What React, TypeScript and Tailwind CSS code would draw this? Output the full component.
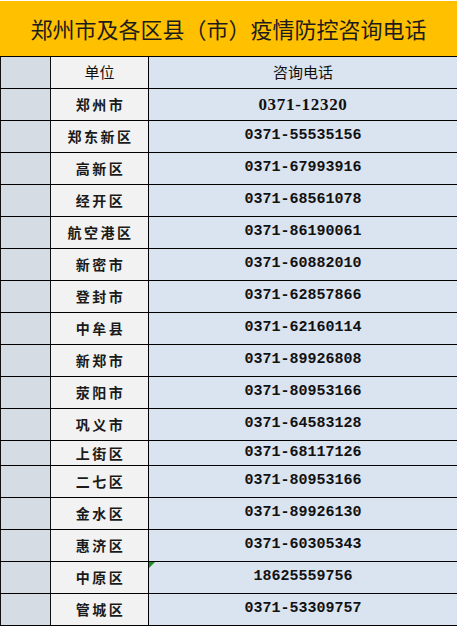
import React from "react";

type Row = { name: string; phone: string; short?: boolean; first?: boolean; flag?: boolean };

const rows: Row[] = [
  { name: "郑州市", phone: "0371-12320", first: true },
  { name: "郑东新区", phone: "0371-55535156" },
  { name: "高新区", phone: "0371-67993916" },
  { name: "经开区", phone: "0371-68561078" },
  { name: "航空港区", phone: "0371-86190061" },
  { name: "新密市", phone: "0371-60882010" },
  { name: "登封市", phone: "0371-62857866" },
  { name: "中牟县", phone: "0371-62160114" },
  { name: "新郑市", phone: "0371-89926808" },
  { name: "荥阳市", phone: "0371-80953166" },
  { name: "巩义市", phone: "0371-64583128" },
  { name: "上街区", phone: "0371-68117126", short: true },
  { name: "二七区", phone: "0371-80953166" },
  { name: "金水区", phone: "0371-89926130" },
  { name: "惠济区", phone: "0371-60305343" },
  { name: "中原区", phone: "18625559756", flag: true },
  { name: "管城区", phone: "0371-53309757" },
];

const cjk = "font-['Noto_Sans_CJK_SC',sans-serif]";

export default function App() {
  return (
    <div className="w-[457px] h-[627px] bg-white overflow-hidden">
      <div
        className={`mt-px h-[55px] bg-[#FFC000] flex items-center justify-center text-[22px] text-[#1c1c1c] ${cjk}`}
      >
        郑州市及各区县（市）疫情防控咨询电话
      </div>
      <div className="border-t border-black">
        <div className="flex h-[32px] border-b border-black">
          <div className="w-[51px] border-l border-r border-[#111] bg-[#D6DCE4]" />
          <div
            className={`w-[98px] border-r border-black bg-[#F2F2F2] flex items-center justify-center text-[15px] text-[#111] ${cjk}`}
          >
            单位
          </div>
          <div
            className={`flex-1 bg-[#DAE3F0] flex items-center justify-center text-[15px] text-[#111] ${cjk}`}
          >
            咨询电话
          </div>
        </div>
        {rows.map((r) => (
          <div
            key={r.name}
            className={`flex border-b border-black ${r.short ? "h-[25px]" : "h-[32px]"}`}
          >
            <div className="w-[51px] border-l border-r border-[#111] bg-[#D6DCE4]" />
            <div
              className={`w-[98px] border-r border-black bg-[#F2F2F2] flex items-center justify-center pl-[2px] text-[14px] font-bold tracking-[2.5px] text-[#1a1a1a] ${cjk}`}
            >
              {r.name}
            </div>
            <div className="relative flex-1 bg-[#DAE3F0] flex items-center justify-center text-[#111]">
              {r.flag && (
                <svg className="absolute left-0 top-0" width="6" height="6" viewBox="0 0 6 6">
                  <polygon points="0,0 6,0 0,6" fill="#1E8B24" />
                </svg>
              )}
              {r.first ? (
                <span className="font-['Liberation_Serif',serif] font-bold text-[17px] tracking-[0.7px]">
                  {r.phone}
                </span>
              ) : (
                <span className="font-['Liberation_Mono',monospace] font-bold text-[15px]">
                  {r.phone}
                </span>
              )}
            </div>
          </div>
        ))}
      </div>
    </div>
  );
}
